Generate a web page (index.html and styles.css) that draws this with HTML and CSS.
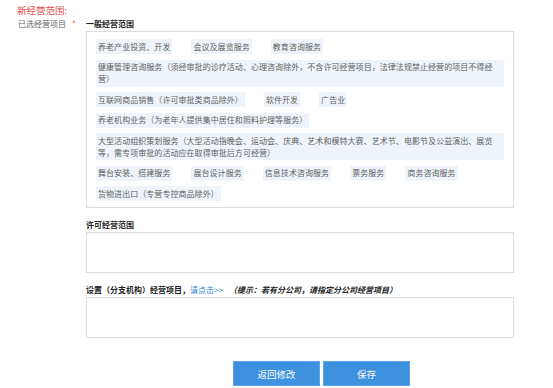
FILE: index.html
```html
<!DOCTYPE html>
<html>
<head>
    <title>经营范围</title>
    <link rel="stylesheet" href="styles.css">
</head>
<body>
    <div class="page">
        <div class="title">新经营范围:</div>
        <div class="row">
            <div class="label">已选经营项目<span class="star">*</span></div>
            <div class="main">
                <div class="section-title">一般经营范围</div>
                <div class="scope-box tags">
                    <span class="tag">养老产业投资、开发</span>
                    <span class="tag">会议及展览服务</span>
                    <span class="tag">教育咨询服务</span>
                    <span class="tag">健康管理咨询服务（须经审批的诊疗活动、心理咨询除外，不含许可经营项目，法律法规禁止经营的项目不得经营）</span>
                    <span class="tag">互联网商品销售（许可审批类商品除外）</span>
                    <span class="tag">软件开发</span>
                    <span class="tag">广告业</span>
                    <span class="tag">养老机构业务（为老年人提供集中居住和照料护理等服务）</span>
                    <span class="tag">大型活动组织策划服务（大型活动指晚会、运动会、庆典、艺术和模特大赛、艺术节、电影节及公益演出、展览等，需专项审批的活动应在取得审批后方可经营）</span>
                    <span class="tag">舞台安装、搭建服务</span>
                    <span class="tag">展台设计服务</span>
                    <span class="tag">信息技术咨询服务</span>
                    <span class="tag">票务服务</span>
                    <span class="tag">商务咨询服务</span>
                    <span class="tag">货物进出口（专营专控商品除外）</span>
                </div>

                <div class="section-title spaced">许可经营范围</div>
                <div class="scope-box empty"></div>

                <div class="section-title spaced">设置（分支机构）经营项目，<a href="#" class="link">请点击&gt;&gt;</a><em class="hint">（提示：若有分公司，请指定分公司经营项目）</em></div>
                <div class="scope-box empty"></div>

                <div class="actions">
                    <button class="btn">返回修改</button>
                    <button class="btn">保存</button>
                </div>
            </div>
        </div>
    </div>
</body>
</html>
```

FILE: styles.css
```css
body {
    margin: 0;
    background: #fff;
    font-family: "Noto Sans CJK SC", "Noto Sans", sans-serif;
    color: #333;
}
.page {
    padding: 4px 0 0 17px;
}
.title {
    font-size: 9.5px;
    line-height: 12px;
    color: #e5484d;
}
.row {
    display: flex;
    margin-top: 2px;
}
.label {
    width: 68px;
    flex-shrink: 0;
    font-size: 8px;
    line-height: 12px;
    color: #666;
    padding-left: 1px;
}
.star {
    color: #e5484d;
    margin-left: 6px;
}
.main {
    width: 428px;
}
.section-title {
    font-size: 8px;
    line-height: 12px;
    font-weight: bold;
    color: #222;
    margin-bottom: 1px;
}
.section-title.spaced {
    margin-top: 11px;
}
.link {
    color: #2f7fd6;
    font-weight: normal;
    text-decoration: none;
}
.hint {
    margin-left: 6px;
    font-style: italic;
    color: #222;
}
.scope-box {
    border: 1px solid #dcdcdc;
    box-sizing: border-box;
    width: 428px;
}
.tags {
    display: flex;
    flex-wrap: wrap;
    column-gap: 19px;
    row-gap: 5.5px;
    padding: 7px 9px 6px 9px;
}
.tag {
    background: #eef4fa;
    color: #5f5f5f;
    font-size: 8px;
    letter-spacing: 0.05px;
    line-height: 12px;
    padding: 1.5px 2px;
}
.empty {
    height: 41px;
}
.actions {
    display: flex;
    gap: 3px;
    padding-left: 147px;
    margin-top: 23px;
}
.btn {
    width: 87px;
    height: 25px;
    border: 1px solid #5aa3e8;
    background: #3d91df;
    color: #fff;
    font-family: inherit;
    font-size: 9.5px;
    cursor: pointer;
}
```
